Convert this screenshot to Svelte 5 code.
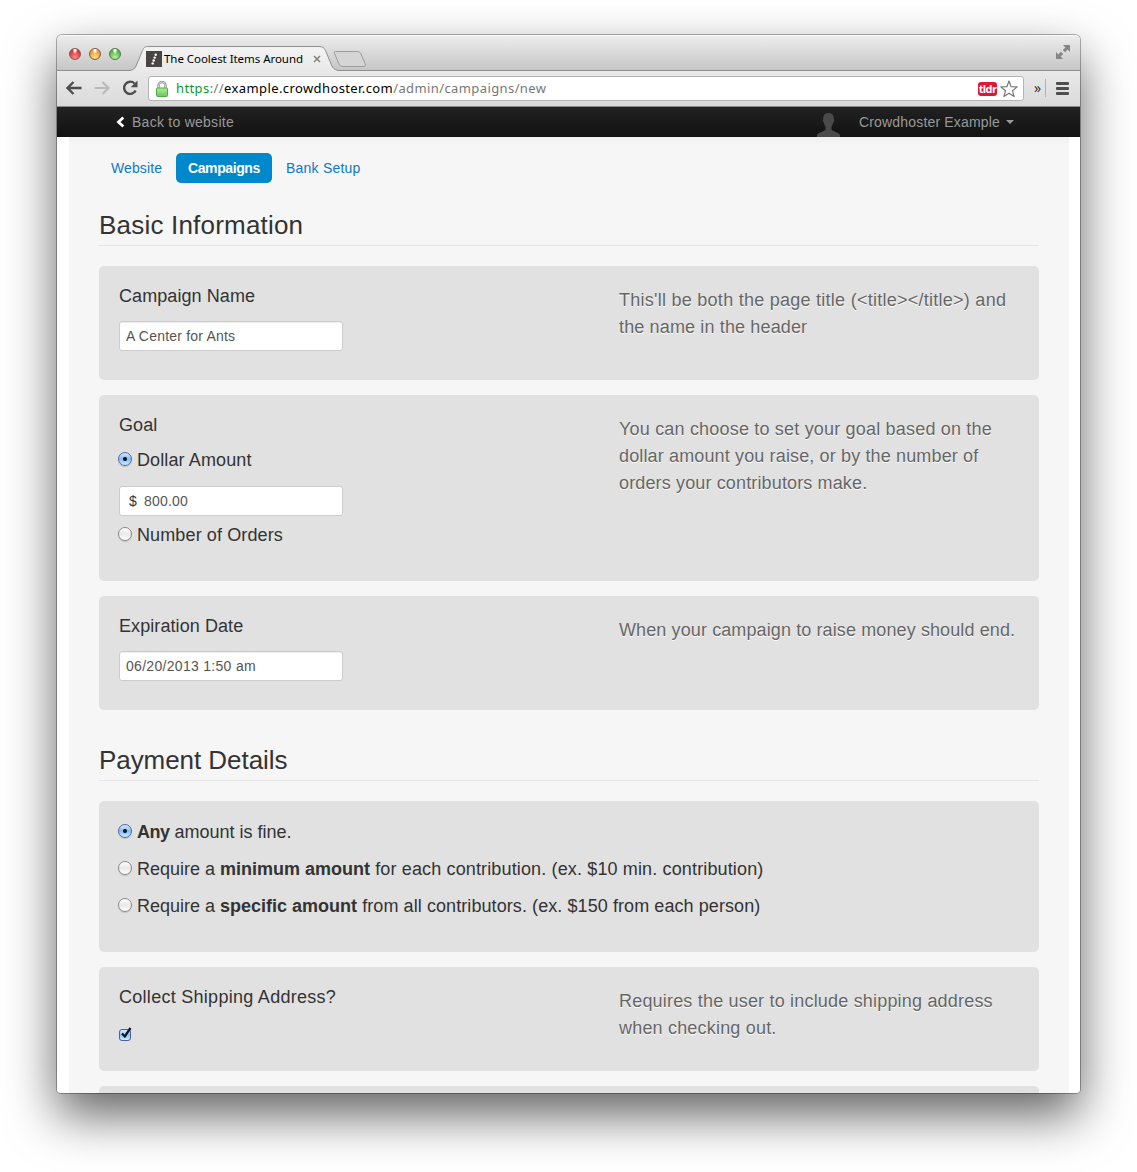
<script lang="ts">
  let goalType = $state('dollars');
  let paymentType = $state('any');
  const payments = [
    { id: 'any', before: '', strong: 'Any', after: ' amount is fine.' },
    { id: 'min', before: 'Require a ', strong: 'minimum amount', after: ' for each contribution. (ex. $10 min. contribution)' },
    { id: 'fixed', before: 'Require a ', strong: 'specific amount', after: ' from all contributors. (ex. $150 from each person)' }
  ];
</script>

<div class="desktop">
  <div class="window">
    <div class="tabstrip">
      <div class="lights"><i class="red"></i><i class="amber"></i><i class="green"></i></div>
      <div class="tab">
        <svg class="tabshape" width="240" height="26" viewBox="0 0 240 26">
          <defs>
            <linearGradient id="tabfill" x1="0" y1="0" x2="0" y2="1"><stop offset="0" stop-color="#f3f3f3" /><stop offset="1" stop-color="#e9e9e9" /></linearGradient>
          </defs>
          <path d="M-2 25.500C2 24.500 3 23.500 4.500 20L10.500 5.500C12 2 13 1.500 17 1.500H187C190.500 1.500 192 2.500 193.500 5.500L199.500 20C201 23.500 202.500 24.500 206 25.500V26H-2Z" fill="url(#tabfill)" />
          <path d="M-2 25.500C2 24.500 3 23.500 4.500 20L10.500 5.500C12 2 13 1.500 17 1.500H187C190.500 1.500 192 2.500 193.500 5.500L199.500 20C201 23.500 202.500 24.500 206 25.500" fill="none" stroke="#8f8f8f" />
          <path d="M203.500 6.500H224C227 6.500 228 7 229 9L233 18.500C234 21 233 21.500 231 21.500H212C209 21.500 208 21 207 19L202.500 8.500C202 7 202.500 6.500 203.500 6.500Z" fill="#d5d5d5" stroke="#9c9c9c" />
        </svg>
        <div class="tabinner">
          <svg width="16" height="16" viewBox="0 0 16 16"><rect width="16" height="16" fill="#4a4545" /><g fill="#fff"><circle cx="9.700" cy="3.700" r="1.200" /><circle cx="8.700" cy="6.600" r="1.200" /><circle cx="7.700" cy="9.500" r="1.200" /><circle cx="6.700" cy="12.400" r="1.200" /></g></svg>
          <span class="tabtitle">The Coolest Items Around</span>
          <svg class="close" width="8" height="8" viewBox="0 0 8 8"><path d="M1 1L7 7M7 1L1 7" stroke="#808080" stroke-width="1.500" /></svg>
        </div>
      </div>
      <svg class="expand" width="16" height="16" viewBox="0 0 16 16" fill="#868686"><path d="M8 1H15V8L12.600 5.600L10 8.200L7.800 6L10.400 3.400Z" /><path d="M8 15H1V8L3.400 10.400L6 7.800L8.200 10L5.600 12.600Z" /></svg>
    </div>

    <div class="toolbar">
      <svg class="back" width="16" height="14" viewBox="0 0 16 14"><path d="M7.500 1L1.500 7L7.500 13M1.500 7H15.500" fill="none" stroke="#4d4d4d" stroke-width="2.300" /></svg>
      <svg class="fwd" width="16" height="14" viewBox="0 0 16 14"><path d="M8.500 1L14.500 7L8.500 13M14.500 7H.5" fill="none" stroke="#b9b9b9" stroke-width="2.100" /></svg>
      <svg class="reload" width="16" height="16" viewBox="0 0 16 16"><path d="M12.600 3.500A6.100 6.100 0 1 0 13.700 10.500" fill="none" stroke="#4d4d4d" stroke-width="2.400" /><path d="M15.500 .5V7.300H8.700Z" fill="#4d4d4d" /></svg>
      <div class="omnibox">
        <svg class="lock" width="12" height="16" viewBox="0 0 12 16"><defs><linearGradient id="lockfill" x1="0" y1="0" x2="0" y2="1"><stop stop-color="#b3eb9b" /><stop offset="1" stop-color="#6cc65b" /></linearGradient></defs><path d="M2.500 8V4.500A3.500 3.500 0 0 1 9.500 4.500V8" fill="none" stroke="#8d8d8d" stroke-width="2.400" /><path d="M2.500 8V4.500A3.500 3.500 0 0 1 9.500 4.500V8" fill="none" stroke="#ededed" stroke-width=".8" /><rect x=".5" y="7" width="11" height="8.500" rx="1" fill="url(#lockfill)" stroke="#53a947" /></svg>
        <span class="url"><b>https</b><em>://</em>example.crowdhoster.com<em>/admin/campaigns/new</em></span>
        <span class="tldr">tldr</span>
        <svg class="star" width="18" height="18" viewBox="0 0 18 18"><path d="M9 1L11.100 6.700L17.200 6.900L12.400 10.700L14.100 16.600L9 13.200L3.900 16.600L5.600 10.700L.8 6.900L6.900 6.700Z" fill="#fff" stroke="#777" stroke-width="1.200" stroke-linejoin="round" /></svg>
      </div>
      <span class="more">»</span>
      <i class="sep"></i>
      <div class="menu"><i></i><i></i><i></i></div>
    </div>

    <div class="navbar">
      <svg class="chev" width="9" height="12" viewBox="0 0 9 12"><path d="M7.300 1.500L2.500 6L7.300 10.500" fill="none" stroke="#fff" stroke-width="2.800" /></svg>
      <span class="backlink">Back to website</span>
      <svg class="avatar" width="23" height="24" viewBox="0 0 23 24"><path d="M11.500 0C15.500 0 17 2.600 16.800 6.200C17.500 7 17 9 16.200 9.500C15.900 11.500 15 12.500 14.500 13.500V16.500C15 18.500 22 19 23 22V24H0V22C1 19 8 18.500 8.500 16.500V13.500C8 12.500 7.100 11.500 6.800 9.500C6 9 5.500 7 6.200 6.200C6 2.600 7.500 0 11.500 0Z" fill="#4a4a4a" /></svg>
      <span class="user">Crowdhoster Example</span>
      <i class="caret"></i>
    </div>

    <div class="page">
      <main>
        <nav><a class="site" href="#website">Website</a><a class="active" href="#campaigns">Campaigns</a><a class="bank" href="#bank">Bank Setup</a></nav>

        <h2>Basic Information</h2>
        <section class="card name">
          <div class="fields">
            <label class="title" for="name">Campaign Name</label>
            <input id="name" type="text" value="A Center for Ants" />
          </div>
          <p><span class="markup">This'll be both the page title (&lt;title&gt;&lt;/title&gt;) and</span><br />the name in the header</p>
        </section>
        <section class="card goal">
          <div class="fields">
            <div class="title">Goal</div>
            <label class="choice dollars"><input type="radio" value="dollars" bind:group={goalType} />Dollar Amount</label>
            <div class="money"><span>$</span><input type="text" value="800.00" aria-label="Dollar amount" /></div>
            <label class="choice orders"><input type="radio" value="orders" bind:group={goalType} />Number of Orders</label>
          </div>
          <p><span class="loose">You can choose to set your goal based on the</span><br />dollar amount you raise, or by the number of<br />orders your contributors make.</p>
        </section>
        <section class="card name">
          <div class="fields">
            <label class="title" for="date">Expiration Date</label>
            <input id="date" class="date" type="text" value="06/20/2013 1:50 am" />
          </div>
          <p class="snug">When your campaign to raise money should end.</p>
        </section>

        <h2 class="second">Payment Details</h2>
        <section class="card payment">
          {#each payments as p}
            <label class="choice {p.id}"><input type="radio" value={p.id} bind:group={paymentType} /><span>{p.before}<strong>{p.strong}</strong><span class="after">{p.after}</span></span></label>
          {/each}
        </section>
        <section class="card shipping">
          <div class="fields">
            <label class="title" for="ship">Collect Shipping Address?</label>
            <div class="check">
              <input id="ship" type="checkbox" checked />
              <svg width="15" height="15" viewBox="0 0 15 15"><path d="M4 7.500L6.800 10.500L12.500 2" fill="none" stroke="#0b1730" stroke-width="2.300" /></svg>
            </div>
          </div>
          <p class="loose">Requires the user to include shipping address<br />when checking out.</p>
        </section>
        <section class="card next"></section>
      </main>
    </div>
  </div>
</div>

<style>
  :global(body) { margin: 0; background: #fff; }
  * { box-sizing: border-box; }
  .desktop { width: 1137px; height: 1172px; padding: 35px 57px 0; overflow: hidden; font-family: "Liberation Sans", Arial, sans-serif; background: #fff; }
  .window { width: 1023px; height: 1058px; overflow: hidden; border-radius: 5px 5px 4px 4px; display: flex; flex-direction: column; background: #fff; box-shadow: 0 0 0 1px rgba(0, 0, 0, .3), 0 22px 50px rgba(0, 0, 0, .62); }
  i { display: block; }
  svg { display: block; flex: none; }

  .tabstrip { flex: none; height: 36px; display: flex; align-items: flex-end; background: linear-gradient(#ececec, #c6c6c6); border-top: 1px solid #f8f8f8; border-bottom: 1px solid #8f8f8f; }
  .lights { width: 75px; height: 35px; display: flex; gap: 8px; padding: 13px 0 0 12px; }
  .lights i { width: 12px; height: 12px; border-radius: 50%; border: 1px solid #7f5a50; }
  .red { background: radial-gradient(ellipse at 50% 10%, #fff 0 10%, transparent 35%), radial-gradient(circle at 50% 85%, #ff8d8d, #e0343c 65%); }
  .amber { background: radial-gradient(ellipse at 50% 10%, #fff 0 10%, transparent 35%), radial-gradient(circle at 50% 85%, #ffe08b, #ee9a35 65%); }
  .lights .green { border-color: #4d7a45; background: radial-gradient(ellipse at 50% 10%, #fff 0 10%, transparent 35%), radial-gradient(circle at 50% 85%, #c0f49b, #5cb552 65%); }
  .tab { width: 240px; height: 26px; position: relative; margin-bottom: -1px; }
  .tabshape { position: absolute; left: 0; top: 0; overflow: visible; }
  .tabinner { position: relative; display: flex; align-items: center; height: 16px; margin: 6px 0 0 14px; }
  .tabtitle { width: 139px; margin-left: 2px; font: 11.500px/16px "Noto Sans", sans-serif; color: #000; white-space: nowrap; letter-spacing: -.05px; }
  .close { margin-left: 10px; }
  .expand { margin: 0 9px 10px auto; }

  .toolbar { flex: none; height: 36px; display: flex; align-items: center; padding-bottom: 1px; background: linear-gradient(#e9e9e9, #dadada); border-bottom: 1px solid #8b8b8b; }
  .back { margin-left: 9px; }
  .fwd { margin-left: 12px; }
  .reload { margin-left: 12px; }
  .omnibox { width: 876px; height: 25px; margin: 1px 0 0 10px; display: flex; align-items: center; background: #fff; border: 1px solid #b5b5b5; border-radius: 3px; }
  .lock { margin-left: 7px; }
  .url { margin: -1px 0 0 8px; width: 400px; font: 13px/18px "Noto Sans", sans-serif; white-space: nowrap; color: #000; letter-spacing: .4px; }
  .url b { font-weight: 400; color: #079c2b; }
  .url em { font-style: normal; color: #777; }
  .tldr { width: 19px; height: 14px; margin-left: auto; border-radius: 3px; background: #dc1738; color: #fff; font: 700 11px/13px "Open Sans", sans-serif; text-align: center; letter-spacing: -.6px; }
  .star { margin: 0 5px 0 3px; }
  .more { width: 9px; margin-left: 10px; font: 14px/16px "Noto Sans", sans-serif; color: #333; }
  .sep { width: 1px; height: 18px; margin-left: 2px; background: #b3b3b3; }
  .menu { margin-left: 10px; width: 13px; display: flex; flex-direction: column; gap: 2px; }
  .menu i { height: 3px; border-radius: 1px; background: #4d4d4d; }

  .navbar { flex: none; height: 30px; display: flex; align-items: center; background: linear-gradient(#222, #111); color: #999; font-size: 14px; line-height: 20px; }
  .chev { margin-left: 59px; }
  .backlink { margin-left: 7px; width: 102px; white-space: nowrap; letter-spacing: .26px; }
  .avatar { margin: 6px 0 0 583px; }
  .user { width: 142px; margin-left: 19px; white-space: nowrap; letter-spacing: .17px; }
  .caret { margin-left: 5px; border: 4px solid transparent; border-top-color: #999; border-bottom: 0; }

  .page { flex: 1; min-height: 0; overflow: hidden; padding-left: 12px; background: #fff; }
  main { width: 1000px; height: 1010px; padding: 16px 30px 0; background: linear-gradient(#eee, #f6f6f6 8px); color: #333; }
  nav { height: 30px; display: flex; gap: 2px; }
  nav a { padding: 0 12px; font-size: 14px; line-height: 30px; border-radius: 5px; color: #0b7bc1; text-decoration: none; white-space: nowrap; }
  nav .site { width: 75px; letter-spacing: .1px; }
  nav .active { width: 96px; background: #08c; color: #fff; font-weight: 700; letter-spacing: -.4px; }
  nav .bank { letter-spacing: .22px; }
  h2 { height: 63px; margin: 0 0 20px; padding-top: 26px; border-bottom: 1px solid #e5e5e5; font-size: 26px; line-height: 32px; font-weight: 400; color: #333; letter-spacing: .2px; }
  h2.second { height: 71px; margin-top: -15px; padding-top: 34px; letter-spacing: -.06px; }
  .card { display: flex; padding: 20px; margin-bottom: 15px; background: #e1e1e1; border-radius: 5px; font-size: 18px; }
  .name { height: 114px; }
  .goal { height: 186px; }
  .fields { width: 500px; }
  .title { display: block; line-height: 20px; letter-spacing: .08px; }
  .shipping .title { letter-spacing: .28px; }
  .card p { margin: 1px 0 0; line-height: 27px; color: #666; text-shadow: 0 1px 0 #fff; white-space: nowrap; letter-spacing: .14px; }
  .card p.loose, .loose { letter-spacing: .19px; }
  .card p.snug { letter-spacing: .11px; }
  .markup { letter-spacing: .26px; }
  input[type='text'] { display: block; width: 224px; height: 30px; margin: 15px 0 0; padding: 0 6px; border: 1px solid #ccc; border-radius: 3px; background: #fff; color: #555; font: 14px/20px "Liberation Sans", sans-serif; letter-spacing: .2px; box-shadow: inset 0 1px 1px rgba(0, 0, 0, .075); }
  input.date { letter-spacing: .3px; }
  .choice { display: flex; align-items: center; height: 20px; line-height: 20px; white-space: nowrap; letter-spacing: .12px; }
  .choice input { appearance: none; flex: none; width: 14px; height: 14px; margin: -2px 5px 0 -1px; border: 1px solid #8a8a8a; border-radius: 50%; background: linear-gradient(#fff, #e9e9e9 50%, #fff); box-shadow: 0 1px 1px rgba(0, 0, 0, .15); }
  .choice input:checked { border-color: #5668a5; background: radial-gradient(circle, #071a38 0 1.700px, transparent 2.400px), linear-gradient(#d5eafa, #86bcf0 50%, #c4f1ff); }
  .dollars { margin-top: 15px; }
  .money { display: flex; align-items: center; width: 224px; height: 30px; margin-top: 16px; border: 1px solid #ccc; border-radius: 3px; background: #fff; font-size: 14px; }
  .money span { width: 18px; padding-left: 9px; }
  .money input[type='text'] { width: 200px; height: 28px; margin: 0; border: 0; box-shadow: none; background: transparent; }
  .orders { margin-top: 9px; }
  .payment { height: 151px; flex-direction: column; gap: 17px; padding-top: 21px; }
  .payment .choice { letter-spacing: 0; }
  .any strong { letter-spacing: -.5px; }
  .min .after { letter-spacing: .14px; }
  .fixed .after { letter-spacing: .08px; }
  .shipping { height: 104px; }
  .check { position: relative; margin-top: 22px; width: 15px; height: 15px; }
  .check input { appearance: none; display: block; width: 12px; height: 12px; margin: 0; border: 1px solid #4c5c9c; border-radius: 3px; background: linear-gradient(#dceefb, #8dc1f2 50%, #c4f1ff); }
  .check svg { position: absolute; left: -1px; top: -3px; }
  .next { height: 60px; }
</style>
